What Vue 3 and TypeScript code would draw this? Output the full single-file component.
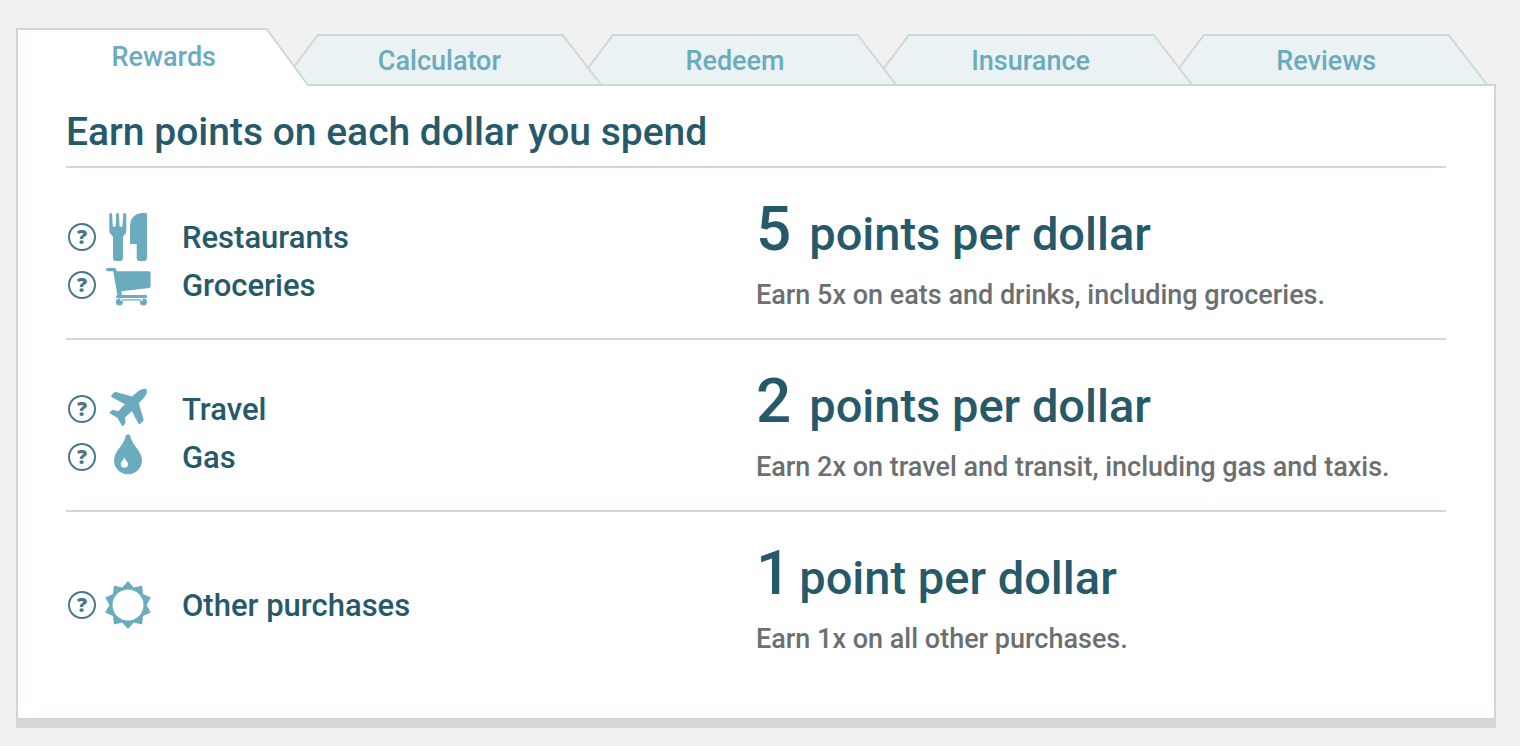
<script setup lang="ts">
import { ref } from 'vue'

type IconName = 'dining' | 'cart' | 'plane' | 'drop' | 'sun'

interface Category {
  name: string
  icon: IconName
}

interface Reward {
  amount: number
  unit: string
  detail: string
  categories: Category[]
}

const tabs: string[] = ['Rewards', 'Calculator', 'Redeem', 'Insurance', 'Reviews']
const active = ref(0)

const rewards: Reward[] = [
  {
    amount: 5,
    unit: 'points per dollar',
    detail: 'Earn 5x on eats and drinks, including groceries.',
    categories: [
      { name: 'Restaurants', icon: 'dining' },
      { name: 'Groceries', icon: 'cart' },
    ],
  },
  {
    amount: 2,
    unit: 'points per dollar',
    detail: 'Earn 2x on travel and transit, including gas and taxis.',
    categories: [
      { name: 'Travel', icon: 'plane' },
      { name: 'Gas', icon: 'drop' },
    ],
  },
  {
    amount: 1,
    unit: 'point per dollar',
    detail: 'Earn 1x on all other purchases.',
    categories: [{ name: 'Other purchases', icon: 'sun' }],
  },
]

const sunPoints: string = Array.from({ length: 20 }, (_, i) => {
  const radius = i % 2 === 0 ? 24 : 18.5
  const angle = (i * Math.PI) / 10
  return `${(24 + radius * Math.sin(angle)).toFixed(1)} ${(24 - radius * Math.cos(angle)).toFixed(1)}`
}).join('L')

const icons: Record<IconName, string> = {
  dining:
    'M6.6 0C7.600 0 8 .5 8.100 1.300L8.700 12.500Q9 14 10.300 14Q11.700 14 11.800 12.500L12.200 1.300Q12.400 0 13.600 0Q14.900 0 15 1.300L15.500 12.500Q15.700 14 17 14Q18.300 14 18.500 12.500L19.200 1.300Q19.300 0 20.700 0Q22.300 0 22.300 1.500V17.500Q22.300 20.500 20.300 22Q19 23 19 24.500V45Q19 48 16 48H12Q9 48 9 45V24.500Q9 23 7.500 22Q5.300 20.500 5.300 17.500V1.500Q5.300 0 6.600 0ZM37 0H41.500Q43 0 43 1.500V45Q43 48 40 48H35.700Q32.700 48 32.700 45V31H26V13Q26 2 37 0Z',
  cart:
    'M3.500 7H10.500Q12 7 12.300 8.600L12.700 10.200H45Q46.600 10.200 46.600 12V25Q46.600 26.700 45 27L17.300 30.300L17.800 34H42Q43.200 34 43.200 35.400Q43.200 37 42 37H13.500Q12 37 12 35.500Q12 34.400 13.400 34L9.300 10.300H3.500Q2 10.300 2 8.600Q2 7 3.500 7ZM15.400 37.500A3.500 3.500 0 1 1 15.400 44.500A3.500 3.500 0 1 1 15.400 37.500ZM39.400 37.500A3.500 3.500 0 1 1 39.400 44.500A3.500 3.500 0 1 1 39.400 37.500ZM16 38.200H39V39.600H16Z',
  plane:
    'M42.300 4.200Q44 6.500 41.500 10.800Q40.500 12.500 34.800 18.300L39.500 34.200Q39.800 35.400 39 36.200L36.300 38.700Q35 39.600 34.200 38.200L27.800 25.900L21 32.500L21.400 37.500Q21.400 38.500 20.800 39.200L19.200 40.700Q18.300 41.300 17.700 40.300L13.300 32.700L5.900 28.600Q5 28 5.700 27.200L7.300 25.700Q8 25 9 25.100L14.200 26.300L20.800 19.200L7.900 12.200Q6.500 11.400 7.400 10.200L10.200 7.600Q11 6.800 12.200 7.100L28 11.600Q34.500 5.800 36 5Q40.500 3 42.300 4.200Z',
  drop:
    'M24 1.300Q26 1.300 27 5.500C29 12.500 38 18.500 38 27.500A14 13.700 0 0 1 10 27.500C10 18.500 19 12.500 21 5.500Q22 1.300 24 1.300ZM20.300 24C19.800 27 16.800 28.600 16.800 31.200A3.600 3.400 0 0 0 24 31.200C24 28.600 20.900 27 20.300 24Z',
  sun: `M${sunPoints}ZM24 8.500A15.500 15.500 0 1 0 24 39.500A15.500 15.500 0 1 0 24 8.500Z`,
}
</script>

<template>
  <main class="page">
    <div class="tabs" role="tablist">
      <button
        v-for="(tab, i) in tabs"
        :key="tab"
        class="tab"
        :class="{ first: i === 0, active: active === i }"
        :style="{ zIndex: active === i ? 10 : 6 - i }"
        type="button"
        role="tab"
        :aria-selected="active === i"
        @click="active = i"
      >
        <svg
          v-if="i === 0"
          class="shape"
          viewBox="0 0 294 58"
          preserveAspectRatio="none"
          aria-hidden="true"
        >
          <path class="fill" d="M1 58V1H251L293 58Z" />
          <path class="line" d="M1 58V1H251L293 58" />
        </svg>
        <svg v-else class="shape" viewBox="0 0 326 50" preserveAspectRatio="none" aria-hidden="true">
          <path class="fill" d="M3 50L40 1H285L323 50Z" />
          <path class="line" d="M3 50L40 1H285L323 50" />
        </svg>
        <span class="tab-label">{{ tab }}</span>
      </button>
    </div>

    <section class="panel">
      <h1 class="heading">Earn points on each dollar you spend</h1>
      <div v-for="reward in rewards" :key="reward.amount" class="reward">
        <ul class="categories">
          <li v-for="category in reward.categories" :key="category.name" class="category">
            <button class="help" type="button" :aria-label="`About ${category.name}`">?</button>
            <svg class="icon" viewBox="0 0 48 48" aria-hidden="true">
              <path :d="icons[category.icon]" fill-rule="evenodd" />
            </svg>
            <span>{{ category.name }}</span>
          </li>
        </ul>
        <div class="rate">
          <h2 class="points" :class="{ single: reward.amount === 1 }">
            <span class="amount">{{ reward.amount }}</span>
            <span>{{ reward.unit }}</span>
          </h2>
          <p class="detail">{{ reward.detail }}</p>
        </div>
      </div>
    </section>
  </main>
</template>

<style>
body {
  background: #f1f1f1;
}
</style>

<style scoped>
.page {
  box-sizing: border-box;
  padding: 28px 24px 18px 16px;
  font-family: Roboto, 'Noto Sans', sans-serif;
  font-weight: 500;
  color: #265a6b;
}

.tabs {
  display: grid;
  grid-template-columns: 276fr repeat(4, 296fr);
  align-items: end;
  padding-right: 22px;
  height: 58px;
  margin-bottom: -2px;
  position: relative;
}

.tab {
  position: relative;
  height: 50px;
  margin-bottom: 2px;
  padding: 0;
  border: 0;
  background: none;
  font: inherit;
  font-size: 27px;
  line-height: 54px;
  color: #6aabc0;
  cursor: pointer;
}

.tab.first {
  height: 58px;
  margin-bottom: 0;
  padding-left: 20px;
  line-height: 56px;
}

.shape {
  position: absolute;
  top: 0;
  left: -14px;
  width: calc(100% + 30px);
  height: 100%;
}

.first .shape {
  left: 0;
  width: calc(100% + 18px);
}

.fill {
  fill: #eaf2f4;
}

.active .fill {
  fill: #fff;
}

.line {
  fill: none;
  stroke: #d0d7da;
  stroke-width: 2;
}

.tab-label {
  position: relative;
}

.panel {
  border: 2px solid #cfd6d9;
  box-shadow: 0 8px 0 #d8d8d8;
  background: #fff;
  padding: 0 48px 36px;
}

.heading {
  margin: 0;
  padding: 22px 0 10px;
  font-size: 39px;
  line-height: 48px;
  font-weight: 500;
}

.reward {
  display: grid;
  grid-template-columns: 1fr 1fr;
  align-items: center;
  border-top: 2px solid #d0d7da;
  padding: 32px 0 16px;
}

.categories {
  list-style: none;
  margin: 0;
  padding: 0 0 0 2px;
}

.category {
  display: flex;
  align-items: center;
  height: 48px;
  font-size: 31px;
}

.help {
  box-sizing: border-box;
  width: 28px;
  height: 28px;
  padding: 0;
  border: 2px solid #47798a;
  border-radius: 50%;
  background: none;
  font-family: 'Open Sans', sans-serif;
  font-size: 20px;
  font-weight: 800;
  line-height: 24px;
  color: #47798a;
  cursor: pointer;
}

.icon {
  width: 48px;
  height: 48px;
  margin: 0 30px 0 8px;
  fill: #6aabc0;
}

.points {
  display: flex;
  align-items: baseline;
  gap: 18px;
  margin: 0;
  font-size: 47px;
  line-height: 68px;
  font-weight: 500;
}

.points.single {
  gap: 8px;
}

.amount {
  font-size: 62px;
  line-height: 56px;
}

.detail {
  margin: 8px 0;
  font-size: 27px;
  line-height: 38px;
  color: #6c6f70;
}
</style>
